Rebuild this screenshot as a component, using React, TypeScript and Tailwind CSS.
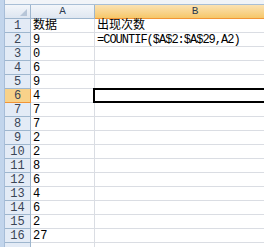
import * as React from "react";

const rows: [string, string][] = [
  ["数据", "出现次数"],
  ["9", "=COUNTIF($A$2:$A$29,A2)"],
  ["0", ""],
  ["6", ""],
  ["9", ""],
  ["4", ""],
  ["7", ""],
  ["7", ""],
  ["2", ""],
  ["2", ""],
  ["8", ""],
  ["6", ""],
  ["4", ""],
  ["6", ""],
  ["2", ""],
  ["27", ""],
  ["", ""],
];

const cellFont = { fontFamily: "'Liberation Mono','Noto Sans CJK SC',monospace" };

export default function App() {
  return (
    <div className="flex h-[247px] w-[264px] overflow-hidden bg-white" style={cellFont}>
      {/* window frame strip */}
      <div className="h-full w-[5px] shrink-0 bg-[#c2d5ec] border-r border-[#a7bdd8]" />
      <div className="flex min-w-0 flex-1 flex-col">
        <div className="h-[5px] shrink-0 bg-[#f1f4f8] border-b border-[#a9bfd6]" />
        {/* column headers */}
        <div className="flex h-[14px] shrink-0">
          <div className="relative w-[26px] shrink-0 border-r border-b border-[#9eb6ce] bg-gradient-to-b from-[#f3f6fa] to-[#dde6f1]">
            <div className="absolute bottom-[2px] right-[3px] h-0 w-0" style={{ borderBottom: "7px solid #b7c6d8", borderLeft: "7px solid transparent" }} />
          </div>
          <div className="flex w-[64px] shrink-0 items-center justify-center border-r border-b border-[#9eb6ce] bg-gradient-to-b from-[#f3f6fa] to-[#dfe7f1] text-[11px] leading-none text-[#2b3a4f]">
            A
          </div>
          <div className="flex w-[200px] shrink-0 items-center justify-center border-b border-[#f29536] bg-gradient-to-b from-[#fbe2b2] to-[#f6c768] text-[11px] leading-none text-[#2b3a4f]">
            B
          </div>
        </div>
        {/* grid body */}
        <div className="flex flex-col">
          {rows.map(([a, b], i) => {
            const n = i + 1;
            const active = n === 6;
            return (
              <div key={n} className="flex h-[14px] shrink-0">
                <div
                  className={
                    active
                      ? "flex w-[26px] shrink-0 items-center justify-center border-r border-b border-[#f29536] bg-[#f8d28a] text-[12px] leading-none text-[#3a4556]"
                      : "flex w-[26px] shrink-0 items-center justify-center border-r border-b border-[#9eb6ce] bg-[#e3ebf6] text-[12px] leading-none text-[#3a4556]"
                  }
                >
                  {n < 17 ? n : ""}
                </div>
                <div className="flex w-[64px] shrink-0 items-center border-r border-b border-[#dadde3] pl-[2px] text-[12px] leading-none text-black">
                  {a}
                </div>
                <div className="relative flex w-[200px] shrink-0 items-center border-b border-[#dadde3] pl-[2px] text-[12px] leading-none text-black">
                  <span className={n === 2 ? "tracking-[-1px]" : ""}>{b}</span>
                  {active && <div className="absolute -left-[2px] -top-[1px] -bottom-[1px] right-0 border-2 border-black" />}
                </div>
              </div>
            );
          })}
        </div>
      </div>
    </div>
  );
}
